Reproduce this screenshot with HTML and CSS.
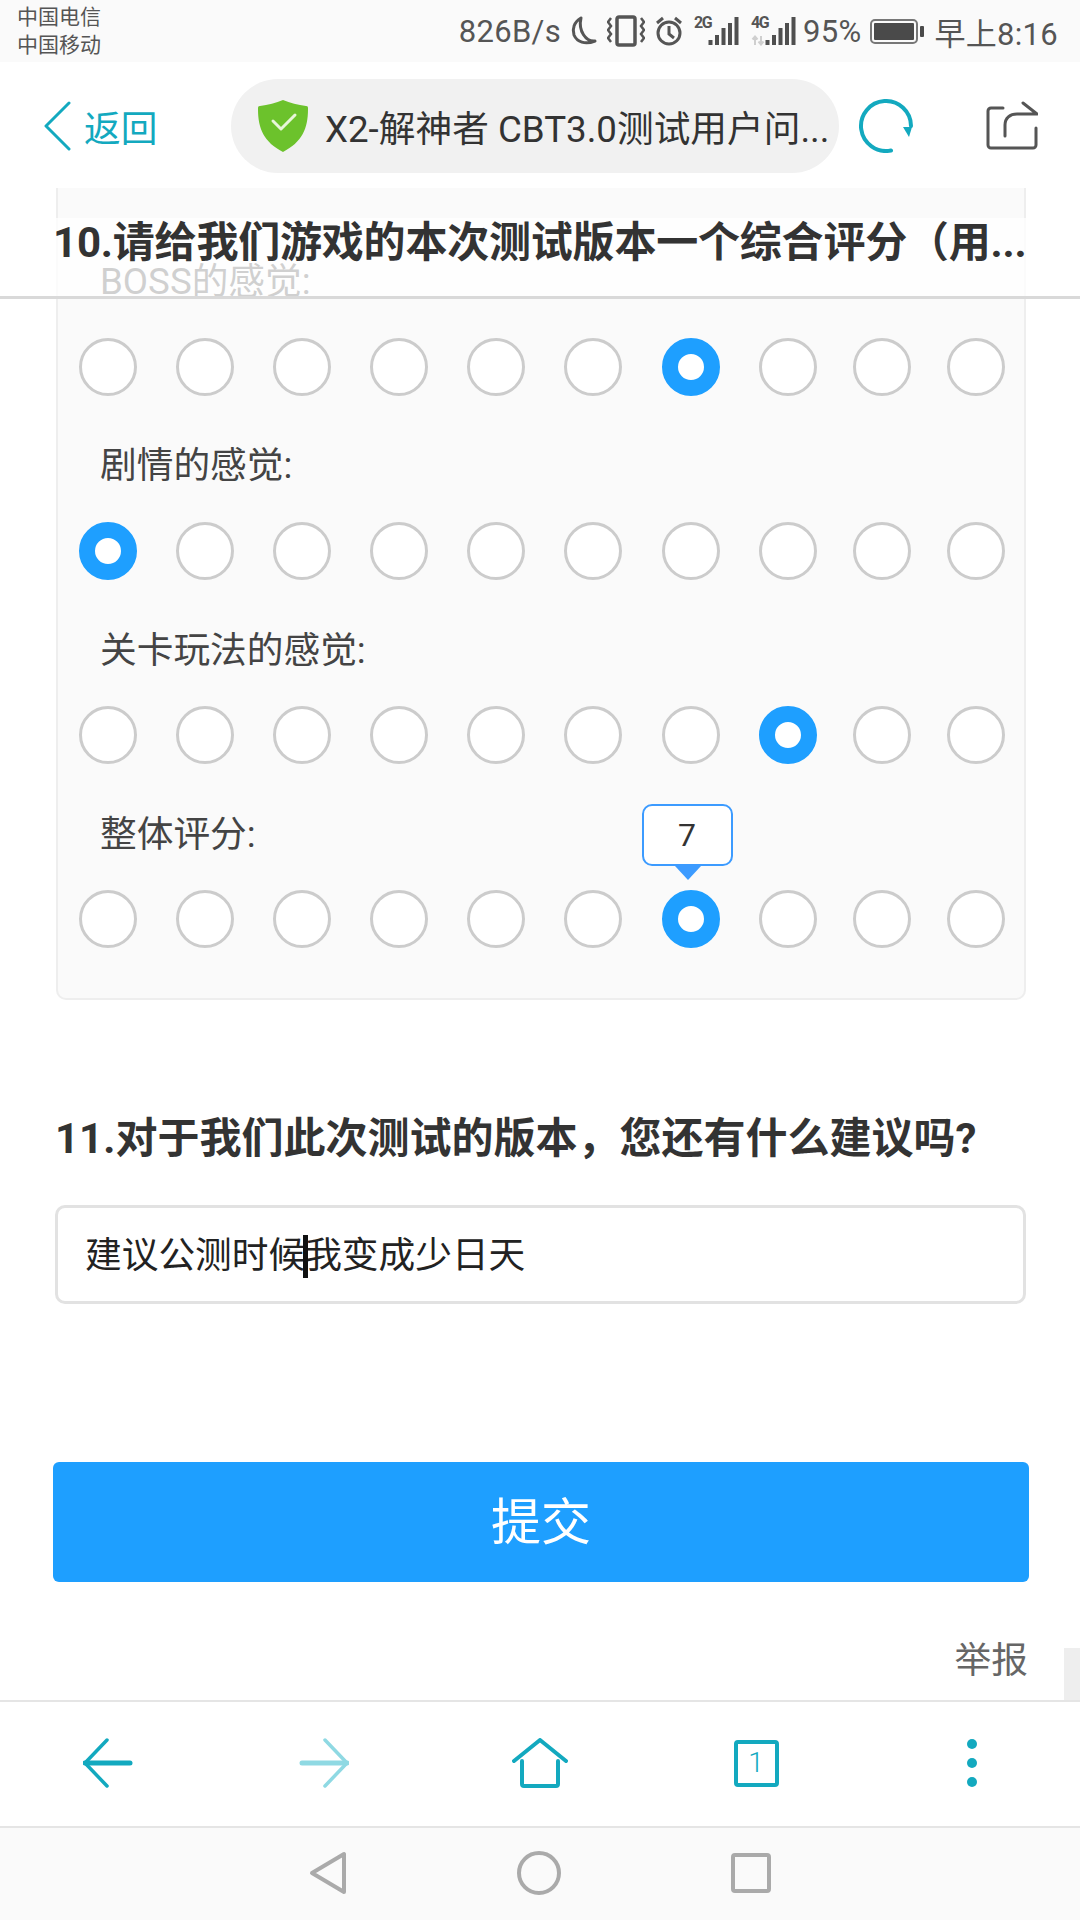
FILE: index.html
```html
<!DOCTYPE html>
<html lang="zh-CN">
<head>
  <meta charset="UTF-8">
  <title>X2-解神者 CBT3.0测试用户问卷</title>
  <link rel="stylesheet" href="styles.css">
</head>
<body>
  <div class="page">
    <div class="status-bar">
      <div class="carriers">
        <div>中国电信</div>
        <div>中国移动</div>
      </div>
      <div class="status-right">
        <span class="speed">826B/s</span>
        <svg class="st-moon" width="28" height="30" viewBox="0 0 28 30"><path d="M12 2C5 6 3 13 5 19c3 7 11 10 21 6C17 26 9 15 12 2z" fill="none" stroke="#555" stroke-width="3" stroke-linejoin="round"/></svg>
        <svg class="st-vib" width="38" height="32" viewBox="0 0 38 32"><rect x="10" y="2" width="18" height="28" rx="2" fill="none" stroke="#555" stroke-width="3.500"/><path d="M4 3L1 7l3 4-3 4 3 4-3 4 3 4M34 3l3 4-3 4 3 4-3 4 3 4-3 4" fill="none" stroke="#555" stroke-width="2.500"/></svg>
        <svg class="st-alarm" width="28" height="30" viewBox="0 0 28 30"><circle cx="14" cy="17" r="11" fill="none" stroke="#555" stroke-width="3"/><path d="M14 10v8l5 4M2 7l6-5M26 7l-6-5" fill="none" stroke="#555" stroke-width="3"/></svg>
        <span class="signal">
          <span class="net">2G</span>
          <svg width="46" height="30" viewBox="0 0 46 30"><path d="M14.500 24h4v5h-4zM21 19h4v10h-4zM27.500 12h4v17h-4zM34 7h4v22h-4zM40.500 1h4v28h-4z" fill="#4f4f4f"/></svg>
        </span>
        <span class="signal">
          <span class="net">4G</span>
          <svg width="46" height="30" viewBox="0 0 46 30"><path d="M14.500 24h4v5h-4zM21 19h4v10h-4zM27.500 12h4v17h-4zM34 7h4v22h-4zM40.500 1h4v28h-4z" fill="#4f4f4f"/><path d="M4 29v-8M1.500 23.500L4 20.500l2.500 3M10 20v8M7.500 25.500l2.500 3 2.500-3" fill="none" stroke="#cfcfcf" stroke-width="2"/></svg>
        </span>
        <span class="percent">95%</span>
        <svg class="st-batt" width="54" height="26" viewBox="0 0 54 26"><rect x="1" y="2" width="46" height="23" rx="4" fill="none" stroke="#777" stroke-width="2"/><rect x="4" y="5" width="40" height="17" rx="1" fill="#4a4a4a"/><rect x="50" y="8" width="4" height="11" rx="1" fill="#4a4a4a"/></svg>
        <span class="clock">早上8:16</span>
      </div>
    </div>

    <div class="header">
      <a class="back">
        <svg width="28" height="50" viewBox="0 0 28 50"><path d="M26 2L3 25l23 23" fill="none" stroke="#13a9bf" stroke-width="3" stroke-linecap="round" stroke-linejoin="round"/></svg>
        <span>返回</span>
      </a>
      <div class="url-pill">
        <svg width="50" height="54" viewBox="0 0 50 54"><path d="M25 1C32 4 40 6 48 7c2 0 2 1 2 3 0 20-6 33-25 43C6 43 0 30 0 10c0-2 0-3 2-3 8-1 16-3 23-6z" fill="#6cc22c"/><path d="M15 22l8 8 14-14" fill="none" stroke="#e8f6da" stroke-width="3" stroke-linecap="round" stroke-linejoin="round"/></svg>
        <span class="url-text">X2-解神者 CBT3.0测试用户问...</span>
      </div>
      <svg class="refresh" width="56" height="54" viewBox="0 0 56 54"><path d="M33 51.500A25 25 0 1 1 53 27" fill="none" stroke="#13a9bf" stroke-width="4" stroke-linecap="round"/><path d="M45 28h9l-3 10z" fill="#13a9bf"/></svg>
      <svg class="share" width="52" height="50" viewBox="0 0 52 50"><path d="M17 7H5a3 3 0 0 0-3 3v34a3 3 0 0 0 3 3h42a3 3 0 0 0 3-3V27" fill="none" stroke="#555" stroke-width="3" stroke-linecap="round"/><path d="M19 35V24c0-7 5-11 12-11h20L37 2" fill="none" stroke="#555" stroke-width="3" stroke-linecap="round" stroke-linejoin="round"/></svg>
    </div>

    <div class="main">
      <div class="card">
        <div class="q-block">
          <div class="q-label">BOSS的感觉:</div>
          <div class="radios">
            <span class="radio"></span><span class="radio"></span><span class="radio"></span><span class="radio"></span><span class="radio"></span><span class="radio"></span><span class="radio on"></span><span class="radio"></span><span class="radio"></span><span class="radio"></span>
          </div>
        </div>
        <div class="q-block">
          <div class="q-label">剧情的感觉:</div>
          <div class="radios">
            <span class="radio on"></span><span class="radio"></span><span class="radio"></span><span class="radio"></span><span class="radio"></span><span class="radio"></span><span class="radio"></span><span class="radio"></span><span class="radio"></span><span class="radio"></span>
          </div>
        </div>
        <div class="q-block">
          <div class="q-label">关卡玩法的感觉:</div>
          <div class="radios">
            <span class="radio"></span><span class="radio"></span><span class="radio"></span><span class="radio"></span><span class="radio"></span><span class="radio"></span><span class="radio"></span><span class="radio on"></span><span class="radio"></span><span class="radio"></span>
          </div>
        </div>
        <div class="q-block last">
          <div class="q-label">整体评分:</div>
          <div class="radios">
            <span class="radio"></span><span class="radio"></span><span class="radio"></span><span class="radio"></span><span class="radio"></span><span class="radio"></span>
            <span class="radio on"><span class="tip">7</span></span>
            <span class="radio"></span><span class="radio"></span><span class="radio"></span>
          </div>
        </div>
      </div>

      <div class="sticky-title">
        <div class="sticky-text">10.请给我们游戏的本次测试版本一个综合评分（用...</div>
      </div>

      <h3 class="q-title">11.对于我们此次测试的版本，您还有什么建议吗?</h3>
      <div class="answer">建议公测时候<span class="caret"></span>我变成少日天</div>

      <button class="submit">提交</button>
      <div class="report">举报</div>
      <div class="scroll-thumb"></div>
    </div>

    <div class="toolbar">
      <svg width="50" height="50" viewBox="0 0 50 50"><path d="M24 2L2 25l22 23" fill="none" stroke="#13a9bf" stroke-width="3.500" stroke-linecap="round" stroke-linejoin="round"/><path d="M2 25h45" stroke="#13a9bf" stroke-width="5" stroke-linecap="round"/></svg>
      <svg width="50" height="50" viewBox="0 0 50 50"><path d="M26 2l22 23-22 23" fill="none" stroke="#8fd9e3" stroke-width="3.500" stroke-linecap="round" stroke-linejoin="round"/><path d="M48 25H3" stroke="#8fd9e3" stroke-width="5" stroke-linecap="round"/></svg>
      <svg width="56" height="50" viewBox="0 0 56 50"><path d="M2 23L28 2l26 21M10 23v23a2 2 0 0 0 2 2h32a2 2 0 0 0 2-2V23" fill="none" stroke="#13a9bf" stroke-width="4" stroke-linecap="round" stroke-linejoin="round"/></svg>
      <div class="tab-count">1</div>
      <svg width="12" height="50" viewBox="0 0 12 50"><circle cx="6" cy="6" r="5" fill="#13a9bf"/><circle cx="6" cy="25" r="5" fill="#13a9bf"/><circle cx="6" cy="44" r="5" fill="#13a9bf"/></svg>
    </div>

    <div class="nav-bar">
      <svg width="38" height="44" viewBox="0 0 38 44"><path d="M35 3v38L3 22z" fill="none" stroke="#aaa" stroke-width="4" stroke-linejoin="round"/></svg>
      <svg width="44" height="44" viewBox="0 0 44 44"><circle cx="22" cy="22" r="20" fill="none" stroke="#aaa" stroke-width="4"/></svg>
      <svg width="40" height="40" viewBox="0 0 40 40"><rect x="2" y="2" width="36" height="36" rx="2" fill="none" stroke="#aaa" stroke-width="4"/></svg>
    </div>
  </div>
</body>
</html>
```

FILE: styles.css
```css
* {
  box-sizing: border-box;
}
body {
  margin: 0;
  font-family: Roboto, "Noto Sans CJK SC", sans-serif;
  background: #fff;
  color: #333;
}
.page {
  width: 1080px;
  height: 1920px;
  display: flex;
  flex-direction: column;
  overflow: hidden;
}

/* status bar */
.status-bar {
  height: 62px;
  background: #fafafa;
  display: flex;
  justify-content: space-between;
  align-items: center;
  padding: 0 22px 0 17px;
  color: #555;
}
.carriers {
  font-size: 21px;
  line-height: 28px;
}
.status-right {
  display: flex;
  align-items: center;
  font-size: 31px;
  letter-spacing: 0.3px;
}
.status-right svg {
  flex: none;
}
.st-moon { margin-left: 8px; }
.st-vib { margin-left: 10px; }
.st-alarm { margin-left: 10px; }
.signal {
  position: relative;
  margin-left: 11px;
  width: 46px;
  height: 30px;
  display: block;
}
.signal svg {
  display: block;
}
.net {
  position: absolute;
  left: 0;
  top: 0;
  font-size: 16px;
  font-weight: 700;
  letter-spacing: -1.5px;
  line-height: 14px;
}
.percent { margin-left: 6px; }
.st-batt { margin-left: 9px; }
.clock { margin-left: 10px; }

/* browser header */
.header {
  height: 126px;
  padding-top: 2px;
  display: flex;
  align-items: center;
  position: relative;
}
.back {
  display: flex;
  align-items: center;
  margin-left: 43px;
  width: 188px;
  gap: 13px;
  color: #13a9bf;
  font-size: 36.700px;
}
.url-pill {
  width: 608px;
  height: 94px;
  border-radius: 47px;
  background: #f1f1f1;
  display: flex;
  align-items: center;
  padding-left: 27px;
  gap: 17px;
  flex: none;
}
.url-text {
  font-size: 36.700px;
  color: #333;
  white-space: nowrap;
}
.refresh {
  margin-left: 19px;
  flex: none;
}
.share {
  margin-left: 72px;
  flex: none;
}

/* page content */
.main {
  position: relative;
  flex: 1;
  overflow: hidden;
}
.card {
  margin: 0 54px 0 56px;
  padding: 69px 0 50px 0;
  background: #fafafa;
  border: 2px solid #eeeeee;
  border-top: none;
  border-radius: 0 0 10px 10px;
}
.q-block {
  margin-bottom: 45.800px;
}
.q-block.last {
  margin-bottom: 0;
}
.q-label {
  font-size: 36.700px;
  line-height: 50px;
  padding-left: 42px;
  margin-bottom: 30.500px;
  color: #444;
}
.radios {
  display: flex;
  gap: 39.100px;
  padding-left: 21px;
}
.radio {
  position: relative;
  display: block;
  flex: none;
  width: 58px;
  height: 58px;
  border-radius: 50%;
  background: #fff;
  border: 3px solid #cccccc;
}
/* the last two columns sit a little closer in the original */
.radio:nth-child(n+9) {
  margin-left: -3px;
}
.radio.on {
  border: 16px solid #1e9fff;
}
.tip {
  position: absolute;
  left: -36px;
  bottom: 66px;
  width: 91px;
  height: 62px;
  background: #fff;
  border: 2px solid #3c9bff;
  border-radius: 10px;
  font-size: 32px;
  line-height: 58px;
  text-align: center;
  color: #333;
}
.tip::after {
  content: "";
  position: absolute;
  left: 31px;
  top: 60px;
  border-left: 13px solid transparent;
  border-right: 13px solid transparent;
  border-top: 14px solid #3c9bff;
}
.sticky-title {
  position: absolute;
  left: 0;
  right: 0;
  top: 30px;
  height: 81px;
  background: rgba(255, 255, 255, 0.75);
  border-bottom: 3px solid #d9d9d9;
}
.sticky-text {
  width: 972px;
  margin-left: 53px;
  font-size: 42px;
  font-weight: 700;
  line-height: 50px;
  color: #333;
  white-space: nowrap;
  letter-spacing: -0.2px;
}
.q-title {
  margin: 109px 0 36px 55px;
  font-size: 42px;
  font-weight: 700;
  line-height: 60px;
  color: #333;
}
.answer {
  position: relative;
  margin: 0 54px 0 55px;
  height: 99px;
  padding-left: 27px;
  background: #fff;
  border: 3px solid #e2e2e2;
  border-radius: 10px;
  font-size: 36.700px;
  line-height: 96px;
  color: #222;
}
.caret {
  position: absolute;
  left: 245px;
  top: 27px;
  width: 5px;
  height: 43px;
  background: #111;
}
.submit {
  display: block;
  width: 976px;
  height: 120px;
  margin: 158px 0 0 53px;
  padding-bottom: 10px;
  border: none;
  border-radius: 6px;
  background: #1e9fff;
  color: #fff;
  font-family: inherit;
  font-size: 50px;
}
.report {
  margin-top: 54px;
  padding-right: 52px;
  text-align: right;
  font-size: 36.700px;
  line-height: 50px;
  color: #666;
}
.scroll-thumb {
  position: absolute;
  right: 0;
  bottom: 0;
  width: 16px;
  height: 52px;
  background: #eeeeee;
}

/* bottom bars */
.toolbar {
  height: 126px;
  flex: none;
  border-top: 2px solid #e5e5e5;
  display: grid;
  grid-template-columns: repeat(5, 1fr);
  justify-items: center;
  align-items: center;
  padding-bottom: 2px;
  background: #fff;
}
.tab-count {
  width: 45px;
  height: 47px;
  border: 4px solid #13a9bf;
  border-radius: 4px;
  text-align: center;
  font-size: 28px;
  line-height: 38px;
  font-weight: 300;
  color: #13a9bf;
}
.nav-bar {
  height: 94px;
  flex: none;
  background: #fafafa;
  border-top: 2px solid #e5e5e5;
  display: flex;
  justify-content: center;
  align-items: center;
  gap: 170px;
  padding-bottom: 2px;
}
```
